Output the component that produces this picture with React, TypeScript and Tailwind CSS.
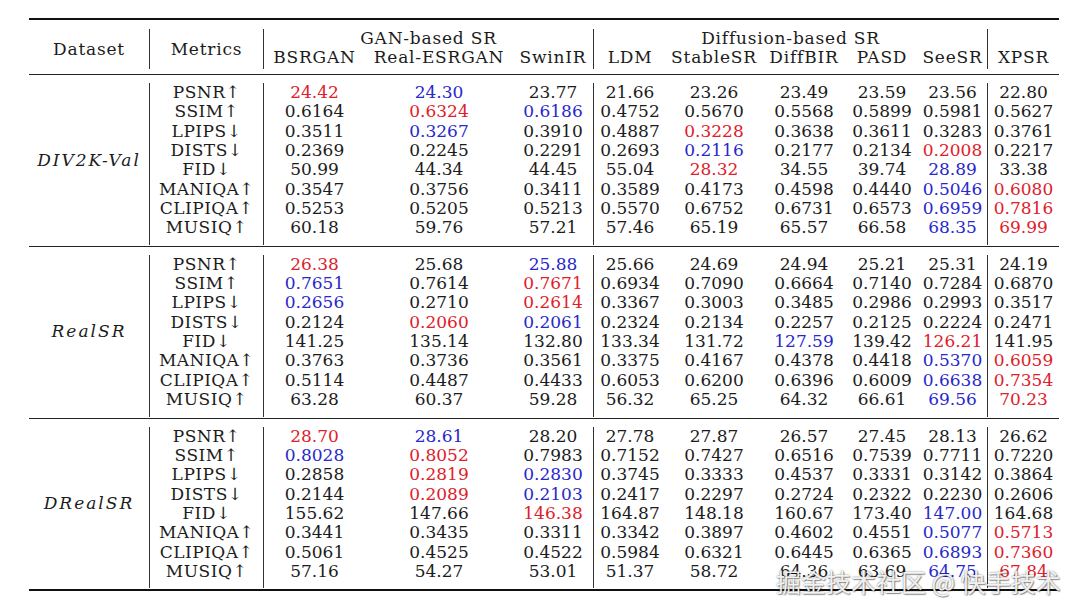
import React from 'react';

// column widths: Dataset, Metrics, BSRGAN, Real-ESRGAN, SwinIR, LDM, StableSR, DiffBIR, PASD, SeeSR, XPSR
const valueCols = [
  'w-[101px]',
  'w-[148px]',
  'w-[81px] border-r border-[#333]',
  'w-[72px]',
  'w-[96px]',
  'w-[84px]',
  'w-[72px]',
  'w-[70px] border-r border-[#333]',
  'w-[71px]',
];

const metrics = ['PSNR↑', 'SSIM↑', 'LPIPS↓', 'DISTS↓', 'FID↓', 'MANIQA↑', 'CLIPIQA↑', 'MUSIQ↑'];

const sections: { name: string; rows: string[][] }[] = [
  {
    name: 'DIV2K-Val',
    rows: [
      ['r24.42', 'b24.30', '23.77', '21.66', '23.26', '23.49', '23.59', '23.56', '22.80'],
      ['0.6164', 'r0.6324', 'b0.6186', '0.4752', '0.5670', '0.5568', '0.5899', '0.5981', '0.5627'],
      ['0.3511', 'b0.3267', '0.3910', '0.4887', 'r0.3228', '0.3638', '0.3611', '0.3283', '0.3761'],
      ['0.2369', '0.2245', '0.2291', '0.2693', 'b0.2116', '0.2177', '0.2134', 'r0.2008', '0.2217'],
      ['50.99', '44.34', '44.45', '55.04', 'r28.32', '34.55', '39.74', 'b28.89', '33.38'],
      ['0.3547', '0.3756', '0.3411', '0.3589', '0.4173', '0.4598', '0.4440', 'b0.5046', 'r0.6080'],
      ['0.5253', '0.5205', '0.5213', '0.5570', '0.6752', '0.6731', '0.6573', 'b0.6959', 'r0.7816'],
      ['60.18', '59.76', '57.21', '57.46', '65.19', '65.57', '66.58', 'b68.35', 'r69.99'],
    ],
  },
  {
    name: 'RealSR',
    rows: [
      ['r26.38', '25.68', 'b25.88', '25.66', '24.69', '24.94', '25.21', '25.31', '24.19'],
      ['b0.7651', '0.7614', 'r0.7671', '0.6934', '0.7090', '0.6664', '0.7140', '0.7284', '0.6870'],
      ['b0.2656', '0.2710', 'r0.2614', '0.3367', '0.3003', '0.3485', '0.2986', '0.2993', '0.3517'],
      ['0.2124', 'r0.2060', 'b0.2061', '0.2324', '0.2134', '0.2257', '0.2125', '0.2224', '0.2471'],
      ['141.25', '135.14', '132.80', '133.34', '131.72', 'b127.59', '139.42', 'r126.21', '141.95'],
      ['0.3763', '0.3736', '0.3561', '0.3375', '0.4167', '0.4378', '0.4418', 'b0.5370', 'r0.6059'],
      ['0.5114', '0.4487', '0.4433', '0.6053', '0.6200', '0.6396', '0.6009', 'b0.6638', 'r0.7354'],
      ['63.28', '60.37', '59.28', '56.32', '65.25', '64.32', '66.61', 'b69.56', 'r70.23'],
    ],
  },
  {
    name: 'DRealSR',
    rows: [
      ['r28.70', 'b28.61', '28.20', '27.78', '27.87', '26.57', '27.45', '28.13', '26.62'],
      ['b0.8028', 'r0.8052', '0.7983', '0.7152', '0.7427', '0.6516', '0.7539', '0.7711', '0.7220'],
      ['0.2858', 'r0.2819', 'b0.2830', '0.3745', '0.3333', '0.4537', '0.3331', '0.3142', '0.3864'],
      ['0.2144', 'r0.2089', 'b0.2103', '0.2417', '0.2297', '0.2724', '0.2322', '0.2230', '0.2606'],
      ['155.62', '147.66', 'r146.38', '164.87', '148.18', '160.67', '173.40', 'b147.00', '164.68'],
      ['0.3441', '0.3435', '0.3311', '0.3342', '0.3897', '0.4602', '0.4551', 'b0.5077', 'r0.5713'],
      ['0.5061', '0.4525', '0.4522', '0.5984', '0.6321', '0.6445', '0.6365', 'b0.6893', 'r0.7360'],
      ['57.16', '54.27', '53.01', '51.37', '58.72', '64.36', '63.69', 'b64.75', 'r67.84'],
    ],
  },
];

const Cell = ({ v }: { v: string }) => {
  if (v[0] === 'r') return <div className="text-[#e0202a]">{v.slice(1)}</div>;
  if (v[0] === 'b') return <div className="text-[#2828cc]">{v.slice(1)}</div>;
  return <div>{v}</div>;
};

const Section = ({ name, rows }: { name: string; rows: string[][] }) => (
  <div className="flex border-t border-[#222] pt-[8px] pb-[1px]">
    <div className="w-[121px] border-r border-[#333] pb-[7px] flex items-center justify-center italic tracking-[2px]">
      {name}
    </div>
    <div className="w-[114px] border-r border-[#333] pb-[7px] flex flex-col items-center tracking-[0.5px]">
      {metrics.map((m) => (
        <div key={m}>{m}</div>
      ))}
    </div>
    {valueCols.map((cls, ci) => (
      <div key={ci} className={`${cls} pb-[7px] flex flex-col items-center`}>
        {rows.map((r, ri) => (
          <Cell key={ri} v={r[ci]} />
        ))}
      </div>
    ))}
  </div>
);

export default function App() {
  return (
    <div className="relative w-[1080px] h-[612px] bg-white pt-[18px] text-[#1c1c1c] text-[17px] leading-[19.35px] [font-family:'DejaVu_Serif','Liberation_Serif',serif]">
      <div className="ml-[29px] w-[1030px] border-t-2 border-b-2 border-[#111]">
        <div className="grid grid-cols-[121px_114px_101px_148px_81px_72px_96px_84px_72px_70px_71px] grid-rows-[19px_21px] mt-[9px] mb-[5px] leading-[19px] tracking-[0.8px]">
          <div className="row-span-2 border-r border-[#333] flex items-center justify-center">Dataset</div>
          <div className="row-span-2 border-r border-[#333] flex items-center justify-center">Metrics</div>
          <div className="col-span-3 border-r border-[#333] text-center">GAN-based SR</div>
          <div className="col-span-5 border-r border-[#333] text-center">Diffusion-based SR</div>
          <div />
          <div className="text-center whitespace-nowrap">BSRGAN</div>
          <div className="text-center whitespace-nowrap">Real-ESRGAN</div>
          <div className="text-center whitespace-nowrap border-r border-[#333]">SwinIR</div>
          <div className="text-center whitespace-nowrap">LDM</div>
          <div className="text-center whitespace-nowrap">StableSR</div>
          <div className="text-center whitespace-nowrap">DiffBIR</div>
          <div className="text-center whitespace-nowrap">PASD</div>
          <div className="text-center whitespace-nowrap border-r border-[#333]">SeeSR</div>
          <div className="text-center whitespace-nowrap">XPSR</div>
        </div>
        {sections.map((s) => (
          <Section key={s.name} name={s.name} rows={s.rows} />
        ))}
      </div>
      <div className="absolute left-[776px] top-[566px] text-[25px] leading-[30px] text-white/90 [font-family:'Noto_Sans_CJK_SC',sans-serif] [text-shadow:0_0_2px_rgba(0,0,0,0.55),1px_1px_1px_rgba(0,0,0,0.35)] whitespace-nowrap">
        掘金技术社区 @ 快手技术
      </div>
    </div>
  );
}
